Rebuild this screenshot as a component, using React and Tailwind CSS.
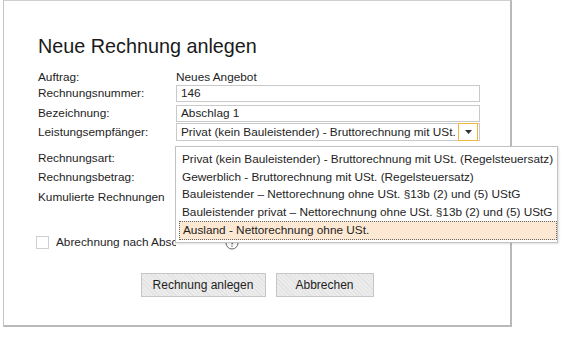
import React from 'react';

const font = { fontFamily: '"Liberation Sans", Arial, sans-serif' };

const OPTIONS = [
  'Privat (kein Bauleistender) - Bruttorechnung mit USt. (Regelsteuersatz)',
  'Gewerblich - Bruttorechnung mit USt. (Regelsteuersatz)',
  'Bauleistender – Nettorechnung ohne USt. §13b (2) und (5) UStG',
  'Bauleistender privat – Nettorechnung ohne USt. §13b (2) und (5) UStG',
  'Ausland - Nettorechnung ohne USt.',
];

/**
 * Row label in the left column.
 */
function Label({ children, h }) {
  return (
    <div className={`flex items-center ${h}`}>
      <span>{children}</span>
    </div>
  );
}

function TextBox({ value }) {
  return (
    <div className="flex items-center h-[17px] border border-[#c9c9c9] pl-[4px] bg-white">
      {value}
    </div>
  );
}

/**
 * Closed select with the orange arrow button.
 */
function Select({ value }) {
  return (
    <div className="flex items-center h-[18px] border border-[#c9c9c9] bg-white pl-[4px]">
      <span className="flex-1 whitespace-nowrap overflow-hidden">{value}</span>
      <span className="flex items-center justify-center w-[20px] h-[18px] border border-[#f2b63c] bg-white mr-[1px]">
        <svg width="7" height="4" viewBox="0 0 7 4">
          <path d="M0 0h7L3.5 4z" fill="#333" />
        </svg>
      </span>
    </div>
  );
}

/**
 * Small circled help icon (mostly hidden behind the open list).
 */
function HelpIcon({ className }) {
  return (
    <svg className={className} width="14" height="14" viewBox="0 0 14 14" fill="none">
      <circle cx="7" cy="7" r="6" stroke="#666" strokeWidth="1" />
      <path d="M5.2 5.4a1.8 1.8 0 1 1 2.4 1.7c-.4.2-.6.5-.6.9v.6" stroke="#555" strokeWidth="1.1" />
      <rect x="6.4" y="9.6" width="1.2" height="1.2" fill="#555" />
    </svg>
  );
}

function Button({ children, className }) {
  return (
    <button
      className={`h-[24px] border border-[#c6c6c6] text-[12px] text-[#1e1e1e] bg-[repeating-linear-gradient(45deg,#e2e2e2_0px,#e2e2e2_1px,#ececec_1px,#ececec_3px)] ${className}`}
    >
      {children}
    </button>
  );
}

export default function App() {
  return (
    <div
      className="relative w-[566px] h-[343px] bg-white text-[11.8px] text-[#1e1e1e] leading-[15px]"
      style={font}
    >
      {/* Dialog panel */}
      <div className="ml-[3px] w-[509px] h-[327px] bg-white border-t border-l border-t-[#cfcfcf] border-l-[#c4c4c4] border-r-2 border-b-2 border-r-[#b9b9b9] border-b-[#b9b9b9] pt-[34px] pl-[34px] flex flex-col">
        <h1 className="text-[19.8px] leading-[23px] text-[#1a1a1a]">Neue Rechnung anlegen</h1>

        <div className="grid grid-cols-[138px_304px] mt-[12px]">
          <Label h="h-[15px]">Auftrag:</Label>
          <div className="flex items-center h-[15px]">Neues Angebot</div>

          <Label h="h-[17px]">Rechnungsnummer:</Label>
          <TextBox value="146" />

          <Label h="h-[17px] mt-[3px]">Bezeichnung:</Label>
          <div className="mt-[3px]">
            <TextBox value="Abschlag 1" />
          </div>

          <Label h="h-[18px] mt-[1px]">Leistungsempfänger:</Label>
          <div className="mt-[1px]">
            <Select value="Privat (kein Bauleistender) - Bruttorechnung mit USt." />
          </div>

          <Label h="h-[18px] mt-[8px]">Rechnungsart:</Label>
          <div className="mt-[8px]" />

          <Label h="h-[18px] mt-[1px]">Rechnungsbetrag:</Label>
          <div className="mt-[1px]" />

          <Label h="h-[22px]">Kumulierte Rechnungen</Label>
          <div />
        </div>

        {/* Checkbox row */}
        <div className="relative flex items-center h-[17px] mt-[26px] -ml-[2px]">
          <span className="shrink-0 w-[13px] h-[13px] border border-[#cfcfcf] bg-white" />
          <span className="ml-[7px] w-[120px] whitespace-nowrap overflow-hidden">
            Abrechnung nach Abschlagszahlung
          </span>
          <HelpIcon className="absolute left-[189px] top-[2px]" />
        </div>

        {/* Actions */}
        <div className="flex justify-center gap-[10px] mt-[22px] -ml-[34px]">
          <Button className="w-[125px]">Rechnung anlegen</Button>
          <Button className="w-[98px]">Abbrechen</Button>
        </div>
      </div>

      {/* Open dropdown list */}
      <div className="absolute left-[175px] top-[146px] w-[383px] h-[97px] bg-white border border-[#c2c2c2] shadow-[1px_1px_2px_rgba(0,0,0,0.12)] pt-[4px] pl-[3px]">
        {OPTIONS.map((opt, i) => (
          <div
            key={opt}
            className={`flex items-center h-[17.5px] pl-[3px] whitespace-nowrap ${
              i === OPTIONS.length - 1
                ? 'bg-[#fde8d3] border border-dotted border-[#666] pl-[2px] h-[18.5px]'
                : ''
            }`}
          >
            {opt}
          </div>
        ))}
      </div>
    </div>
  );
}
